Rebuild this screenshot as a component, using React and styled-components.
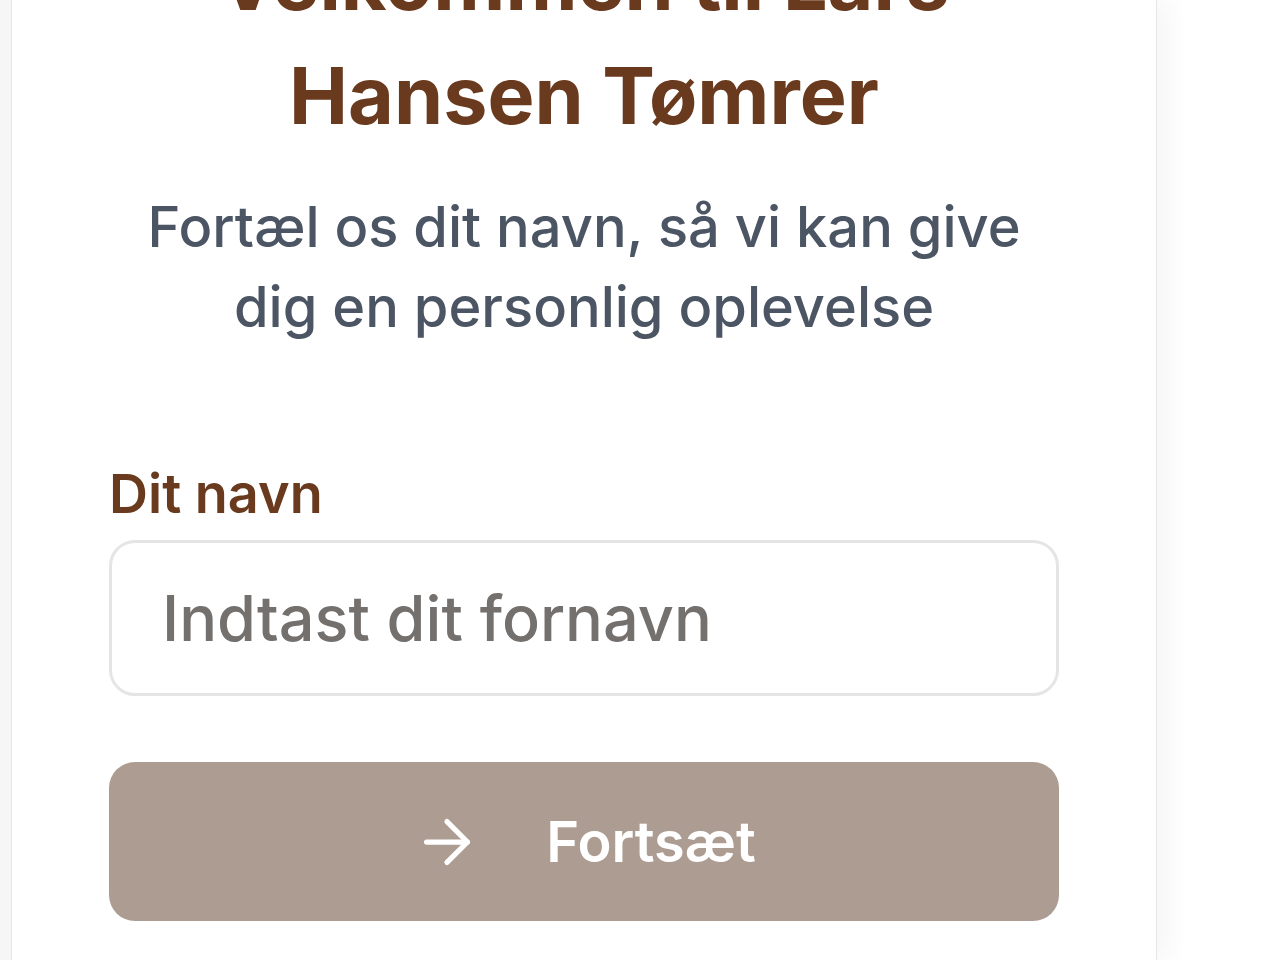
import React, { useState } from "react";
import styled, { createGlobalStyle } from "styled-components";
import { ArrowRight } from "lucide-react";

const GlobalStyle = createGlobalStyle`
  html, body {
    margin: 0;
    padding: 0;
    background: #ffffff;
    font-family: Inter, "Noto Sans", sans-serif;
    overflow: hidden;
  }
`;

const Page = styled.div`
  display: flex;
  height: 960px;
  background: linear-gradient(to right, #f6f6f6 0, #f6f6f6 11px, #fff 11px);
  overflow: hidden;
`;

const Card = styled.div`
  margin-left: 11px;
  width: 1146px;
  background: #fff;
  border-left: 1.5px solid #e6e6e6;
  border-right: 1.5px solid #e6e6e6;
  box-shadow: 14px 0 22px rgba(0, 0, 0, 0.035);
  padding: 0 97px;
  box-sizing: border-box;
  display: flex;
  flex-direction: column;
`;

const Title = styled.h1`
  margin: -76px 0 0;
  font-size: 79px;
  line-height: 114px;
  font-weight: 700;
  color: #6a3a1e;
  text-align: center;
`;

const Subtitle = styled.p`
  margin: 35px 30px 0;
  font-size: 56px;
  line-height: 80px;
  font-weight: 500;
  color: #4b5563;
  text-align: center;
`;

const Field = styled.div`
  margin-top: 107px;
  display: flex;
  flex-direction: column;
`;

const Label = styled.label`
  font-size: 54px;
  line-height: 80px;
  font-weight: 600;
  color: #6a3a1e;
`;

const Input = styled.input`
  margin-top: 6px;
  height: 156px;
  box-sizing: border-box;
  border: 3px solid #e5e5e5;
  border-radius: 26px;
  padding: 0 50px;
  font-family: inherit;
  font-size: 63px;
  font-weight: 500;
  color: #333;
  outline: none;
  &::placeholder {
    color: #74706d;
  }
`;

const Button = styled.button`
  margin-top: 66px;
  height: 159px;
  border: none;
  border-radius: 26px;
  background: #ac9c91;
  color: #fff;
  font-family: inherit;
  font-size: 56px;
  font-weight: 600;
  display: flex;
  align-items: center;
  justify-content: center;
  gap: 64px;
  cursor: pointer;
  padding: 0;
`;

export default function App() {
  const [name, setName] = useState("");
  return (
    <>
      <GlobalStyle />
      <Page>
        <Card>
          <Title>Velkommen til Lars Hansen Tømrer</Title>
          <Subtitle>
            Fortæl os dit navn, så vi kan give dig en personlig oplevelse
          </Subtitle>
          <Field>
            <Label htmlFor="navn">Dit navn</Label>
            <Input
              id="navn"
              placeholder="Indtast dit fornavn"
              value={name}
              onChange={(e) => setName(e.target.value)}
            />
          </Field>
          <Button>
            <ArrowRight size={70} strokeWidth={1.8} />
            Fortsæt
          </Button>
        </Card>
      </Page>
    </>
  );
}
